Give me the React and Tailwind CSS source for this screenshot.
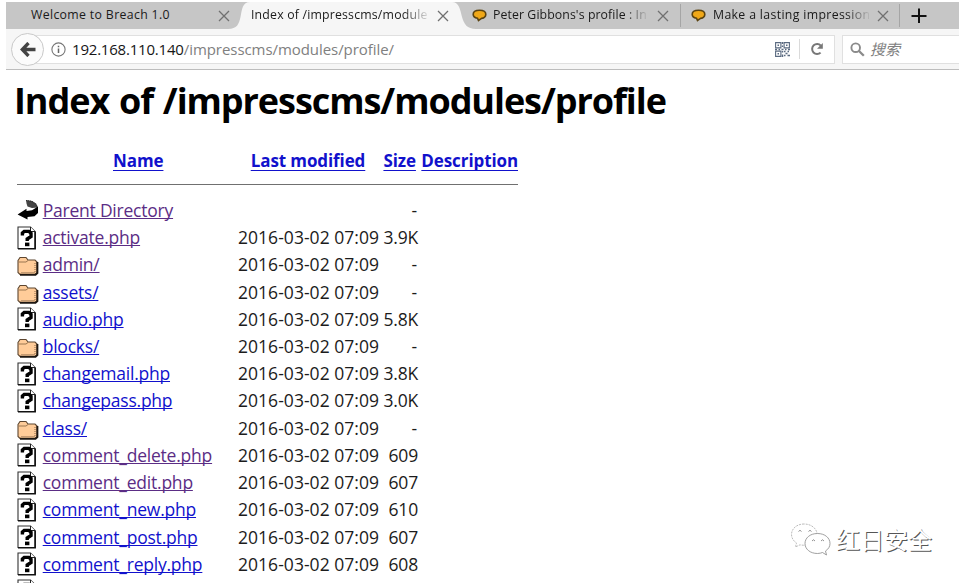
import React from 'react';

const VISITED = 'text-[#5b2d85]';
const LINK = 'text-[#1111cc]';

const ROWS = [
  { icon: 'back', name: 'Parent Directory', size: '-', visited: true },
  { icon: 'file', name: 'activate.php', date: true, size: '3.9K', visited: true },
  { icon: 'dir', name: 'admin/', date: true, size: '-', visited: true },
  { icon: 'dir', name: 'assets/', date: true, size: '-' },
  { icon: 'file', name: 'audio.php', date: true, size: '5.8K' },
  { icon: 'dir', name: 'blocks/', date: true, size: '-' },
  { icon: 'file', name: 'changemail.php', date: true, size: '3.8K' },
  { icon: 'file', name: 'changepass.php', date: true, size: '3.0K' },
  { icon: 'dir', name: 'class/', date: true, size: '-' },
  { icon: 'file', name: 'comment_delete.php', date: true, size: '609', visited: true },
  { icon: 'file', name: 'comment_edit.php', date: true, size: '607', visited: true },
  { icon: 'file', name: 'comment_new.php', date: true, size: '610' },
  { icon: 'file', name: 'comment_post.php', date: true, size: '607' },
  { icon: 'file', name: 'comment_reply.php', date: true, size: '608' },
  { icon: 'file' },
];

function FileIcon() {
  return (
    <svg className="block h-[24px] w-[20px]" viewBox="0 0 20 24">
      <path d="M1 1H13.5L18 5.5V22.5H1Z" fill="#fff" stroke="#333" strokeWidth="1.1" />
      <path d="M13.5 1V5.5H18" fill="#fff" stroke="#222" strokeWidth="1" />
      <path d="M18.2 5.5V22.7H1" fill="none" stroke="#111" strokeWidth="1.5" />
      <path d="M5.4 9.6V7L7.2 5.4H12L14 7.2V10.5L10.2 13V15" fill="none" stroke="#000" strokeWidth="3.4" />
      <rect x="8" y="16.6" width="4.4" height="3.6" fill="#000" />
    </svg>
  );
}

function FolderIcon() {
  return (
    <svg className="mt-[3px] block h-[20px] w-[22px]" viewBox="0 0 22 20">
      <path d="M1 4.5L3 1.5H9L11 4H18L20 6V16.5L18.2 18.5H3L1 16.5Z" fill="#ffcc99" stroke="#5d4630" strokeWidth="1.1" />
      <path d="M20.4 6V17L18.5 18.8H3" fill="none" stroke="#1d1712" strokeWidth="1.9" />
      <path d="M1.5 6H9L11 4.5" fill="none" stroke="#9a7650" strokeWidth="1" />
      <path d="M18 7V16.5H4" fill="none" stroke="#8a6848" strokeWidth="1" strokeDasharray="1 1" />
    </svg>
  );
}

function BackIcon() {
  return (
    <svg className="block h-[22px] w-[22px]" viewBox="0 0 22 22">
      <path d="M9 1L15 2L19 4.5L21 8.5L15 9L10.5 7.5L9.5 4.5Z" fill="#444" />
      <path d="M9 1.5L15 2.5L19 5.5L20.5 9" fill="none" stroke="#333" strokeWidth="1.2" strokeDasharray="1.2 0.8" />
      <path d="M21 7.5V14L17.5 17.2L10.5 18V20.6L0.6 15.6L9.5 9.8V12L15 11.2Z" fill="#000" />
    </svg>
  );
}

const ICONS = { file: FileIcon, dir: FolderIcon, back: BackIcon };

function Close() {
  return (
    <svg className="block h-3 w-3 shrink-0" viewBox="0 0 12 12">
      <path d="M1 1L11 11M11 1L1 11" stroke="#707070" strokeWidth="1.3" />
    </svg>
  );
}

function Bubble() {
  return (
    <svg className="-mt-px block h-[13px] w-[15px] shrink-0" viewBox="0 0 15 13">
      <path d="M7.5 1.2C11 1.2 13.8 2.6 13.8 5.2C13.8 7.7 11.5 9.1 9.5 9.4L6.5 11.5L5.5 9.2C3 8.8 1.2 7.5 1.2 5.2C1.2 2.6 4 1.2 7.5 1.2Z" fill="#f0a818" stroke="#5b4310" strokeWidth="1.6" />
    </svg>
  );
}

function QrIcon() {
  return (
    <svg className="block h-[15px] w-[15px]" viewBox="0 0 15 15" fill="none" stroke="#5a6a80">
      <path d="M.6 .6H5.9V5.9H.6ZM9.1 .6H14.4V5.9H9.1ZM.6 9.1H5.9V14.4H.6Z" strokeWidth="1.1" />
      <path d="M2.5 3.2H4M11 3.2H12.5M2.5 11.7H4M7.5 0V2M7.5 3.5V5M0 7.5H2M3.5 7.5H5M6.5 7.5H8.5M10 7.5H11.5M13 7.5H15M7.5 9V10.5M7.5 12.5V15M9 9.5H10.5M12.5 9.5H14M10.5 11.5H12.5M9 13.5H10.5M12.5 13.5H15" strokeWidth="1.5" />
    </svg>
  );
}

function TabTitle({ children, className }) {
  return <span className={'-mt-[2px] block shrink-0 whitespace-nowrap text-[12.3px] leading-[20px] text-[#1a1a1a] ' + className}>{children}</span>;
}

function TabStrip() {
  return (
    <div className="relative flex h-[27px] items-center bg-[#c6c6c6]">
      <svg className="absolute left-[222px] top-0 h-[27px] w-[248px]" viewBox="0 0 248 27">
        <path d="M0 27C9 27 11 22 12.5 15C14 7 14.5 0 22 0H224C231 0 232 7 234 15C236 22 239 27 248 27Z" fill="#f6f6f6" />
      </svg>
      <div className="relative flex w-[234px] shrink-0 items-center pl-[25px]">
        <TabTitle className="w-[187px] tracking-[0.34px]">Welcome to Breach 1.0</TabTitle>
        <Close />
      </div>
      <div className="relative flex w-[226px] shrink-0 items-center pl-[11px]">
        <TabTitle className="mr-[6px] w-[180px] tracking-[0.19px] [mask-image:linear-gradient(to_right,#000_84%,transparent)]">Index of /impresscms/module</TabTitle>
        <Close />
      </div>
      <div className="flex h-full w-[214px] shrink-0 items-center pl-[6px]">
        <Bubble />
        <TabTitle className="ml-[6px] mr-[8px] w-[156px] tracking-[0.09px] [mask-image:linear-gradient(to_right,#000_84%,transparent)]">Peter Gibbons's profile : In</TabTitle>
        <Close />
      </div>
      <div className="h-[23px] w-px shrink-0 bg-[#a5a5a5]" />
      <div className="flex w-[218px] shrink-0 items-center pl-[10px]">
        <Bubble />
        <TabTitle className="ml-[7px] mr-[6px] w-[158px] tracking-[0.34px] [mask-image:linear-gradient(to_right,#000_84%,transparent)]">Make a lasting impression</TabTitle>
        <Close />
      </div>
      <div className="h-[23px] w-px shrink-0 bg-[#a5a5a5]" />
      <svg className="ml-[11px] block h-4 w-4 shrink-0" viewBox="0 0 16 16">
        <path d="M8 .5V15M.5 8H15.5" stroke="#111" strokeWidth="2" />
      </svg>
    </div>
  );
}

function Toolbar() {
  return (
    <div className="flex h-[41px] items-center border-b border-[#bdbdbd] bg-[#f6f6f6]">
      <div className="z-10 ml-[5px] flex h-[33px] w-[33px] shrink-0 items-center justify-center rounded-full border border-[#c9c9c9] bg-[#fbfbfb]">
        <svg className="block h-[15px] w-[16px]" viewBox="0 0 16 15">
          <path d="M15.5 7.5H2.5M8.5 1L2.3 7.5L8.5 14" fill="none" stroke="#444" strokeWidth="3.3" />
        </svg>
      </div>
      <div className="-ml-[12px] flex h-[29px] w-[803px] shrink-0 items-center border border-[#e0e0e0] bg-white pl-[18px]">
        <svg className="block h-[15px] w-[15px] shrink-0" viewBox="0 0 15 15">
          <circle cx="7.5" cy="7.5" r="6.6" fill="none" stroke="#777" strokeWidth="1.1" />
          <path d="M7.5 6.5V11M7.5 3.8V5.3" stroke="#666" strokeWidth="1.5" />
        </svg>
        <span className="ml-[6px] w-[703px] shrink-0 whitespace-nowrap text-[15px] leading-[22px] tracking-[-0.06px] text-[#808080]">
          <span className="tracking-[-0.2px] text-[#161616]">192.168.110.140</span>/impresscms/modules/profile/
        </span>
        <QrIcon />
        <div className="ml-[9px] h-[20px] w-px bg-[#dadada]" />
        <svg className="ml-[10px] block h-[14px] w-[14px]" viewBox="0 0 14 14">
          <path d="M10.6 10.6A5 5 0 1 1 10.8 3.6" fill="none" stroke="#777" strokeWidth="2" />
          <path d="M12.8 1V6.8H7Z" fill="#777" />
        </svg>
      </div>
      <div className="ml-[7px] flex h-[29px] flex-1 items-center border border-r-0 border-[#e0e0e0] bg-white pl-[7px]">
        <svg className="block h-[15px] w-[15px]" viewBox="0 0 15 15">
          <circle cx="5.7" cy="5.7" r="4.3" fill="none" stroke="#8a8a8a" strokeWidth="1.9" />
          <path d="M9 9L13.8 13.8" stroke="#8a8a8a" strokeWidth="2.3" />
        </svg>
        <span className="ml-[5px] font-['Noto_Sans_CJK_SC',sans-serif] text-[15px] italic leading-[20px] text-[#808080]">搜索</span>
      </div>
    </div>
  );
}

const HEAD = 'underline decoration-1 underline-offset-[3px] [text-decoration-skip-ink:none]';

export default function App() {
  return (
    <div className="relative h-[583px] w-[964px] overflow-hidden bg-white pl-[6px] pt-[2px] font-['Open_Sans','Noto_Sans_CJK_SC',sans-serif] text-[#1c1c1c]">
      <div className="w-[953px]">
        <TabStrip />
        <Toolbar />
      </div>
      <div className="pl-[8px]">
        <h1 className="mt-[6px] whitespace-nowrap text-[36px] font-bold leading-[50px] tracking-[-1.06px] text-black [word-spacing:1.5px]">Index of /impresscms/modules/profile</h1>
        <div className="ml-[3px] w-[501px]">
          <div className={'mt-[21px] flex h-[28px] items-center whitespace-nowrap text-[17px] font-bold tracking-[-0.1px] ' + LINK}>
            <div className="w-[221px] pl-[96px]"><a className={HEAD}>Name</a></div>
            <div className="w-[141px] pl-[13px]"><a className={HEAD}>Last modified</a></div>
            <div className="w-[38px] pl-[5px]"><a className={HEAD}>Size</a></div>
            <div className="pl-[5px]"><a className={HEAD}>Description</a></div>
          </div>
          <div className="mt-[9px] h-px bg-[#707070]" />
          <div className="mt-[11.8px]">
            {ROWS.map((r, i) => {
              const Icon = ICONS[r.icon];
              return (
                <div key={i} className="flex h-[27.23px] items-center whitespace-nowrap text-[17.5px] leading-[27px]">
                  <div className="w-[25.7px] shrink-0"><Icon /></div>
                  <div className="w-[195.3px] shrink-0">
                    <a className={'underline decoration-1 underline-offset-[1px] tracking-[-0.22px] [text-decoration-skip-ink:none] ' + (r.visited ? VISITED : LINK)}>{r.name}</a>
                  </div>
                  <div className="w-[141px] shrink-0 tracking-[0.04px]">{r.date ? '2016-03-02 07:09' : ''}</div>
                  <div className={'shrink-0 text-right tracking-[-0.2px] ' + (r.size === '-' ? 'w-[38px]' : 'w-[39px]')}>{r.size}</div>
                </div>
              );
            })}
          </div>
        </div>
      </div>
      <div className="absolute left-[790px] top-[522px] flex items-center">
        <svg className="block h-[34px] w-[42px]" viewBox="0 0 42 34" fill="#fff" stroke="#aaa" strokeWidth="0.8">
          <path d="M14 2C7 2 1.5 6.5 1.5 12.5C1.5 16 3.5 19 6.5 21L5.5 25L10 22.8C20 25 28 19 27 11C26 6 21 2 14 2Z" strokeDasharray="2 1" />
          <path d="M27.5 11.5C20 11.5 15 16 15 21.5C15 27 20 31.5 27.5 31.5C29.5 31.5 31 31 32.5 30.5L36.5 33L35.5 29C38.5 27 40 24.5 40 21.5C40 16 35 11.5 27.5 11.5Z" stroke="#888" />
          <path d="M8.5 9.5Q10 7 11.5 9.5M18.5 9.5Q20 7 21.5 9.5M22 19Q23.5 16.5 25 19M31 19Q32.5 16.5 34 19" fill="none" stroke="#777" />
        </svg>
        <span className="ml-[4px] font-['Noto_Sans_CJK_SC',sans-serif] text-[24px] leading-[34px] text-white [text-shadow:1px_1px_0_#555]">红日安全</span>
      </div>
    </div>
  );
}
